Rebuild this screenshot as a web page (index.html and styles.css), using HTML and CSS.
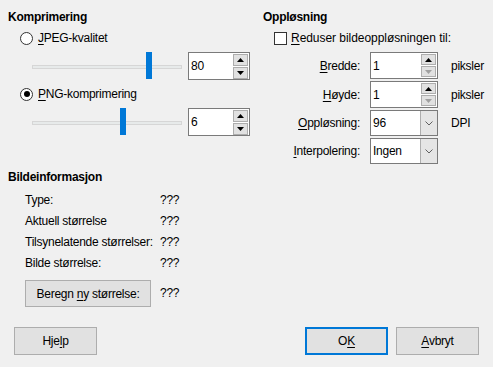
FILE: index.html
```html
<!DOCTYPE html>
<html lang="nb">
<head>
<meta charset="utf-8">
<title>Komprimer bilde</title>
<link rel="stylesheet" href="styles.css">
</head>
<body>
<div class="dialog">
  <div class="top">
    <section class="col-left">
      <h2 class="head">Komprimering</h2>
      <div class="radio-row"><span class="radio"></span><span><u>J</u>PEG-kvalitet</span></div>
      <div class="slider-row">
        <div class="slider"><div class="track"></div><div class="thumb" style="left:114px"></div></div>
        <div class="spin wide"><span class="val">80</span><div class="spin-btns"><span class="sbtn"><svg width="7" height="4" viewBox="0 0 7 4"><path d="M0 4 L3.5 0 L7 4 Z" fill="#000"/></svg></span><span class="sbtn"><svg width="7" height="4" viewBox="0 0 7 4"><path d="M0 0 L3.5 4 L7 0 Z" fill="#000"/></svg></span></div></div>
      </div>
      <div class="radio-row second"><span class="radio checked"></span><span><u>P</u>NG-komprimering</span></div>
      <div class="slider-row">
        <div class="slider"><div class="track"></div><div class="thumb" style="left:88px"></div></div>
        <div class="spin wide"><span class="val">6</span><div class="spin-btns"><span class="sbtn"><svg width="7" height="4" viewBox="0 0 7 4"><path d="M0 4 L3.5 0 L7 4 Z" fill="#000"/></svg></span><span class="sbtn"><svg width="7" height="4" viewBox="0 0 7 4"><path d="M0 0 L3.5 4 L7 0 Z" fill="#000"/></svg></span></div></div>
      </div>
    </section>
    <section class="col-right">
      <h2 class="head">Oppløsning</h2>
      <div class="check-row"><span class="checkbox"></span><span class="check-text"><u>R</u>eduser bildeoppløsningen til:</span></div>
      <div class="res-grid">
        <span class="lbl"><u>B</u>redde:</span>
        <div class="spin"><span class="val">1</span><div class="spin-btns"><span class="sbtn"><svg width="7" height="4" viewBox="0 0 7 4"><path d="M0 4 L3.5 0 L7 4 Z" fill="#000"/></svg></span><span class="sbtn"><svg width="7" height="4" viewBox="0 0 7 4"><path d="M0 0 L3.5 4 L7 0 Z" fill="#a0a0a0"/></svg></span></div></div>
        <span class="unit">piksler</span>
        <span class="lbl"><u>H</u>øyde:</span>
        <div class="spin"><span class="val">1</span><div class="spin-btns"><span class="sbtn"><svg width="7" height="4" viewBox="0 0 7 4"><path d="M0 4 L3.5 0 L7 4 Z" fill="#000"/></svg></span><span class="sbtn"><svg width="7" height="4" viewBox="0 0 7 4"><path d="M0 0 L3.5 4 L7 0 Z" fill="#a0a0a0"/></svg></span></div></div>
        <span class="unit">piksler</span>
        <span class="lbl"><u>O</u>ppløsning:</span>
        <div class="combo"><span class="val">96</span><span class="drop"><svg width="8" height="5" viewBox="0 0 8 5"><path d="M0.5 0.5 L4 4 L7.5 0.5" fill="none" stroke="#606060" stroke-width="1"/></svg></span></div>
        <span class="unit">DPI</span>
        <span class="lbl"><u>I</u>nterpolering:</span>
        <div class="combo"><span class="val">Ingen</span><span class="drop"><svg width="8" height="5" viewBox="0 0 8 5"><path d="M0.5 0.5 L4 4 L7.5 0.5" fill="none" stroke="#606060" stroke-width="1"/></svg></span></div>
        <span class="unit"></span>
      </div>
    </section>
  </div>
  <section class="info">
    <h2 class="head">Bildeinformasjon</h2>
    <div class="info-grid">
      <span>Type:</span><span>???</span>
      <span>Aktuell størrelse</span><span>???</span>
      <span>Tilsynelatende størrelser:</span><span>???</span>
      <span>Bilde størrelse:</span><span>???</span>
      <span class="btn-cell"><button class="btn calc">Beregn <u>n</u>y størrelse:</button></span><span class="calc-val">???</span>
    </div>
  </section>
  <div class="buttons">
    <button class="btn">Hje<u>l</u>p</button>
    <div class="right-btns">
      <button class="btn default">O<u>K</u></button>
      <button class="btn"><u>A</u>vbryt</button>
    </div>
  </div>
</div>
</body>
</html>
```
FILE: styles.css
```css
* { box-sizing: border-box; }
html, body { margin: 0; padding: 0; }
body {
  width: 493px;
  height: 367px;
  background: #f0f0f0;
  font-family: "Liberation Sans", Arial, sans-serif;
  font-size: 12px;
  letter-spacing: -0.25px;
  color: #000;
  overflow: hidden;
}
u { text-decoration-thickness: 1px; text-underline-offset: 2px; }
.dialog { padding: 10px 0 0 8px; }
.top { display: flex; }
.head { margin: 0; font-size: 12px; font-weight: bold; line-height: 15px; }
.col-left { width: 255px; }
.col-right { flex: 1; }

.radio-row { display: flex; align-items: center; height: 14px; margin-top: 6px; padding-left: 12px; line-height: 14px; }
.radio-row.second { margin-top: 7px; }
.radio { width: 13px; height: 13px; border: 1px solid #333; border-radius: 50%; background: #fff; margin-right: 5px; position: relative; flex: none; }
.radio.checked::after { content: ""; position: absolute; left: 2.5px; top: 2.5px; width: 6px; height: 6px; border-radius: 50%; background: #000; }

.slider-row { display: flex; align-items: center; margin-top: 7px; padding-left: 24px; height: 28px; }
.slider { position: relative; width: 150px; height: 28px; margin-right: 6px; }
.track { position: absolute; left: 0; right: 0; top: 13px; height: 4px; background: #e7eaea; border: 1px solid #d6d6d6; }
.thumb { position: absolute; top: 0; width: 6px; height: 27px; background: #0078d7; }

.spin { display: flex; align-items: center; width: 68px; height: 27px; border: 1px solid #7a7a7a; background: #fff; padding-left: 2px; }
.spin.wide { width: 62px; height: 28px; }
.spin .val, .combo .val { flex: 1; line-height: 14px; }
.spin-btns { display: flex; flex-direction: column; gap: 1px; margin-right: 1px; }
.sbtn { display: flex; align-items: center; justify-content: center; width: 15px; height: 11px; background: #e1e1e1; border: 1px solid #adadad; }
.spin.wide .sbtn { height: 12px; }

.check-row { display: flex; align-items: center; height: 14px; margin-top: 6px; padding-left: 11px; line-height: 14px; }
.check-text { letter-spacing: -0.05px; }
.checkbox { width: 13px; height: 13px; border: 1px solid #333; background: #fff; margin-right: 4px; flex: none; }

.res-grid { display: grid; grid-template-columns: 97px 68px auto; column-gap: 10px; row-gap: 2px; margin-top: 7px; align-items: center; }
.res-grid .lbl { text-align: right; }
.res-grid .unit { padding-left: 3px; }
.combo { display: flex; align-items: stretch; width: 68px; height: 26px; border: 1px solid #7a7a7a; background: #fff; padding-left: 2px; }
.combo .val { align-self: center; }
.drop { display: flex; align-items: center; justify-content: center; width: 17px; background: #e5e5e5; border-left: 1px solid #adadad; }

.info { margin-top: 6px; }
.info-grid { display: grid; grid-template-columns: 135px auto; margin-top: 5px; padding-left: 17px; }
.info-grid > span { line-height: 21px; }
.info-grid .btn-cell, .info-grid .calc-val { margin-top: 6px; line-height: 27px; }

.btn { font-family: inherit; font-size: 12px; letter-spacing: -0.25px; color: #000; background: #e1e1e1; border: 1px solid #adadad; height: 28px; width: 83px; padding: 0; margin: 0; }
.btn.calc { width: 126px; height: 27px; display: block; }
.btn.default { border: 2px solid #0078d7; }
.buttons { display: flex; justify-content: space-between; margin-top: 20px; padding: 0 14px 0 6px; }
.right-btns { display: flex; gap: 8px; }
```
